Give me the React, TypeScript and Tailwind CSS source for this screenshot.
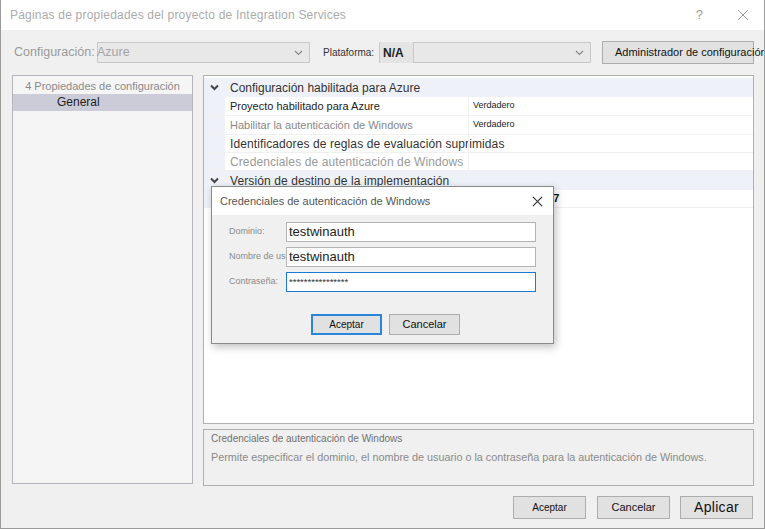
import React from "react";

const Chevron = ({ className = "" }: { className?: string }) => (
  <svg width="9" height="6" viewBox="0 0 9 6" className={className}>
    <path d="M1 1 L4.5 4.5 L8 1" fill="none" stroke="currentColor" strokeWidth="1.2" />
  </svg>
);

const CatChevron = () => (
  <svg width="9" height="7" viewBox="0 0 9 7" className="text-[#444]">
    <path d="M1 1.5 L4.5 5 L8 1.5" fill="none" stroke="currentColor" strokeWidth="2" />
  </svg>
);

const XIcon = ({ size = 12, color = "#555", w = 1 }: { size?: number; color?: string; w?: number }) => (
  <svg width={size} height={size} viewBox="0 0 12 12">
    <path d="M1 1 L11 11 M11 1 L1 11" stroke={color} strokeWidth={w} fill="none" />
  </svg>
);

function Row({ name, value, nameCls, h = "h-[19px]" }: { name: string; value?: string; nameCls: string; h?: string }) {
  return (
    <div className={`flex ${h} border-b border-[#f0f0f0] bg-white`}>
      <div className="w-[21px] bg-[#eef1f8] shrink-0" />
      <div className={`w-[243px] shrink-0 pl-[5px] flex items-center whitespace-nowrap overflow-visible ${nameCls}`}>{name}</div>
      <div className="flex-1 border-l border-[#f0f0f0] pl-[4px] flex items-center text-[9px] text-[#222]">
        {value}
      </div>
    </div>
  );
}

export default function App() {
  return (
    <div className="w-[765px] h-[529px] relative bg-[#f0f0f0] border-l border-r border-b border-[#9a9a9a] overflow-hidden font-['Liberation_Sans',Arial,sans-serif]">
      {/* title bar */}
      <div className="h-[30px] bg-white flex items-center pl-[9px] pr-[15px]">
        <div className="text-[12px] text-[#ababab] tracking-[0.2px]">Páginas de propiedades del proyecto de Integration Services</div>
        <div className="flex-1" />
        <div className="text-[13px] text-[#9a9a9a] mr-[34px]">?</div>
        <XIcon size={12} color="#9a9a9a" />
      </div>

      <div className="pl-[11px] pr-[10px]">
        {/* config row */}
        <div className="mt-[11px] h-[23px] flex items-center">
          <div className="w-[85px] pl-[2px] text-[12.5px] text-[#9a9a9a] whitespace-nowrap">Configuración:</div>
          <div className="w-[213px] h-[21px] bg-[#e8e8e8] border border-[#c8c8c8] flex items-center justify-between pr-[6px]">
            <span className="text-[12.5px] text-[#a4a4a4] -ml-[1px]">Azure</span>
            <Chevron className="text-[#888]" />
          </div>
          <div className="ml-[13px] w-[56px] text-[10px] text-[#333]">Plataforma:</div>
          <div className="w-[34px] h-[21px] border-l border-[#c8c8c8] bg-[#e4e4e4] flex items-center pl-[3px] text-[12px] font-bold text-[#222]">N/A</div>
          <div className="w-[178px] h-[21px] bg-[#e8e8e8] border border-[#c8c8c8] flex items-center justify-end pr-[6px]">
            <Chevron className="text-[#888]" />
          </div>
          <div className="ml-[11px] w-[152px] h-[23px] bg-[#e1e1e1] border border-[#adadad] flex items-center pl-[12px] text-[11px] text-[#111] whitespace-nowrap overflow-visible">
            Administrador de configuración
          </div>
        </div>

        {/* main */}
        <div className="mt-[11px] flex gap-[10px]">
          <div className="w-[181px] h-[409px] bg-[#f5f5f5] border border-[#b4b4bc] pt-[3px]">
            <div className="h-[15px] text-center text-[11px] text-[#8a8a8a] leading-[15px]">4 Propiedades de configuración</div>
            <div className="h-[17px] bg-[#cbccd8] pl-[44px] text-[12px] text-[#222] leading-[17px]">General</div>
          </div>

          <div className="w-[551px] flex flex-col">
            <div className="h-[349px] bg-white border border-[#b0b0b0] pt-[2px]">
              <div className="h-[19px] bg-[#eef1f8] flex items-center pl-[6px]">
                <CatChevron />
                <span className="ml-[11px] text-[12px] text-[#333]">Configuración habilitada para Azure</span>
              </div>
              <Row name="Proyecto habilitado para Azure" value="Verdadero" nameCls="text-[11px] text-[#222]" />
              <Row name="Habilitar la autenticación de Windows" value="Verdadero" nameCls="text-[11px] text-[#888]" />
              <Row name="Identificadores de reglas de evaluación suprimidas" nameCls="text-[12px] text-[#333] tracking-[0.1px]" h="h-[18px]" />
              <Row name="Credenciales de autenticación de Windows" nameCls="text-[12px] text-[#999] tracking-[0.1px]" h="h-[18px]" />
              <div className="h-[19px] bg-[#eef1f8] flex items-center pl-[6px]">
                <CatChevron />
                <span className="ml-[11px] text-[12px] text-[#333] tracking-[0.1px]">Versión de destino de la implementación</span>
              </div>
              <div className="flex h-[18px] border-b border-[#f0f0f0]">
                <div className="w-[21px] bg-[#eef1f8]" />
                <div className="w-[243px] bg-white" />
                <div className="flex-1 pl-[4px] flex items-center text-[11px] font-bold text-[#111]">SQL Server 2017</div>
              </div>
            </div>
            <div className="mt-[5px] h-[57px] border border-[#b0b0b0] bg-[#f0f0f0] px-[7px] pt-[1px]">
              <div className="text-[10px] text-[#707070] leading-[15px]">Credenciales de autenticación de Windows</div>
              <div className="mt-[4px] text-[10.8px] text-[#8a8a8a] leading-[15px]">Permite especificar el dominio, el nombre de usuario o la contraseña para la autenticación de Windows.</div>
            </div>
          </div>
        </div>

        {/* bottom buttons */}
        <div className="mt-[10px] flex justify-end pr-[1px]">
          <div className="w-[73px] h-[23px] bg-[#e1e1e1] border border-[#adadad] flex items-center justify-center text-[10px] text-[#111]">Aceptar</div>
          <div className="ml-[11px] w-[73px] h-[23px] bg-[#e1e1e1] border border-[#adadad] flex items-center justify-center text-[11px] text-[#111]">Cancelar</div>
          <div className="ml-[10px] w-[73px] h-[23px] bg-[#e1e1e1] border border-[#adadad] flex items-center justify-center text-[14px] text-[#111] tracking-[0.3px]">Aplicar</div>
        </div>
      </div>

      {/* dialog */}
      <div className="absolute left-[210px] top-[186px] w-[343px] h-[158px] border border-[#8a8a8a] bg-[#f0f0f0] shadow-[2px_3px_8px_rgba(0,0,0,0.25)] flex flex-col">
        <div className="h-[28px] bg-white flex items-center pl-[8px] pr-[10px]">
          <span className="text-[11px] text-[#555]">Credenciales de autenticación de Windows</span>
          <div className="flex-1" />
          <XIcon size={11} color="#333" w={1.3} />
        </div>
        <div className="pl-[17px] pt-[7px]">
          {[
            { label: "Dominio:", value: "testwinauth", focus: false },
            { label: "Nombre de usuario:", value: "testwinauth", focus: false },
            { label: "Contraseña:", value: "****************", focus: true },
          ].map((f, i) => (
            <div key={i} className="flex items-center h-[20px] mb-[5px]">
              <div className="w-[57px] overflow-hidden whitespace-nowrap text-[9px] text-[#8a8a8a]">{f.label}</div>
              <div className={`w-[250px] h-[20px] bg-white border ${f.focus ? "border-[#1a7ad4]" : "border-[#b4b4b4]"} flex items-center pl-[2px] ${f.focus ? "text-[9.5px] text-[#333]" : "text-[13px] text-[#222]"}`}>
                {f.value}
              </div>
            </div>
          ))}
        </div>
        <div className="mt-[17px] flex gap-[7px] pl-[99px]">
          <div className="w-[71px] h-[21px] bg-[#e1e1e1] border-2 border-[#2a86d8] flex items-center justify-center text-[10px] text-[#111]">Aceptar</div>
          <div className="w-[71px] h-[21px] bg-[#e1e1e1] border border-[#adadad] flex items-center justify-center text-[11px] text-[#111]">Cancelar</div>
        </div>
      </div>
    </div>
  );
}
